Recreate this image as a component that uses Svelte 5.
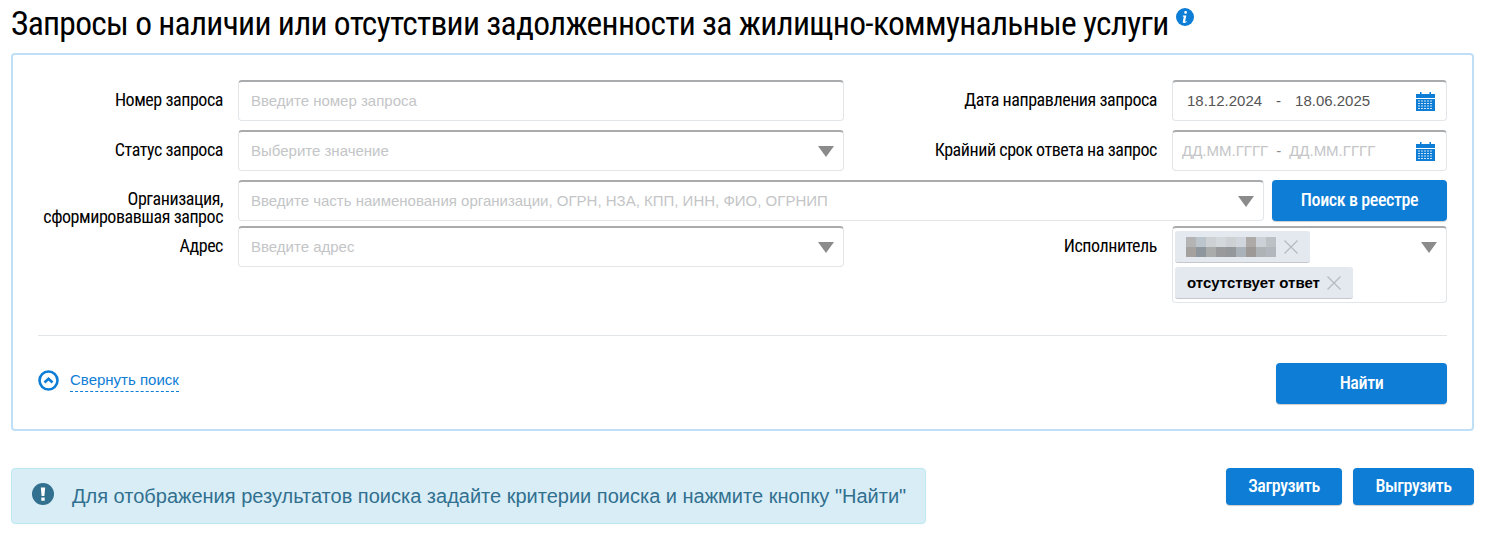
<script>
  // colours of the blurred name in the first chip
  const blur = [
    "#b4b4b4", "#bcc5cc", "#cdd1d3", "#d3d8dc", "#cdd1d4", "#d0d6db", "#aeaaa8", "#cbd1d6", "#bcc1c6",
    "#a4a19f", "#8e969e", "#a9acaa", "#989a9c", "#95989b", "#a9b2b9", "#9d9997", "#aeb3b5", "#b2b7bd",
  ];
</script>

<main>
  <h1>
    Запросы о наличии или отсутствии задолженности за жилищно-коммунальные услуги
    <svg class="info" viewBox="0 0 18 18" width="18" height="18">
      <circle cx="9" cy="9" r="9" fill="#0d7dd6" />
      <path d="M9.600 3a1.400 1.400 0 1 1-.01 2.800 1.400 1.400 0 0 1 .01-2.800zM6.800 7.600h3.600l-1.300 5.600c-.1.400.4.500 1.500-.3l.3.500c-1.300 1.300-2.200 1.800-3.200 1.700-.9-.1-1.100-.7-.9-1.500l1-4.900-1.100-.3z" fill="#fff" />
    </svg>
  </h1>

  <section class="panel">
    <div class="row r1">
      <label class="lbl left">Номер запроса</label>
      <div class="field wide"><span class="ph">Введите номер запроса</span></div>
      <label class="lbl right">Дата направления запроса</label>
      <div class="field date">
        <span class="val">18.12.2024</span><span class="dash val">-</span><span class="val">18.06.2025</span>
        <svg class="cal" viewBox="0 0 19 20" width="19" height="20">
          <path d="M0 3h4V1h1.500v2h8V1H15v2h4v4H0z" fill="#0d7dd6" />
          <path d="M0 8h19v12H0z" fill="#0d7dd6" />
          <path d="M2 10h15M2 12.500h15M2 15h15M2 17.500h15" stroke="#cfe5f7" stroke-width="1.200" stroke-dasharray="2 1" />
        </svg>
      </div>
    </div>

    <div class="row r2">
      <label class="lbl left">Статус запроса</label>
      <div class="field wide"><span class="ph">Выберите значение</span><i class="arrow"></i></div>
      <label class="lbl right">Крайний срок ответа на запрос</label>
      <div class="field date empty">
        <span class="ph">ДД.ММ.ГГГГ</span><span class="dash ph2">-</span><span class="ph">ДД.ММ.ГГГГ</span>
        <svg class="cal" viewBox="0 0 19 20" width="19" height="20">
          <path d="M0 3h4V1h1.500v2h8V1H15v2h4v4H0z" fill="#0d7dd6" />
          <path d="M0 8h19v12H0z" fill="#0d7dd6" />
          <path d="M2 10h15M2 12.500h15M2 15h15M2 17.500h15" stroke="#cfe5f7" stroke-width="1.200" stroke-dasharray="2 1" />
        </svg>
      </div>
    </div>

    <div class="row r3">
      <label class="lbl left two">Организация,<br />сформировавшая запрос</label>
      <div class="field grow">
        <span class="ph">Введите часть наименования организации, ОГРН, НЗА, КПП, ИНН, ФИО, ОГРНИП</span><i class="arrow"></i>
      </div>
      <button class="btn registry">Поиск в реестре</button>
    </div>

    <div class="row r4">
      <label class="lbl left">Адрес</label>
      <div class="field wide"><span class="ph">Введите адрес</span><i class="arrow"></i></div>
      <label class="lbl right">Исполнитель</label>
      <div class="field multi">
        <div class="chip">
          <div class="blur">
            {#each blur as c}
              <b style="background: {c}"></b>
            {/each}
          </div>
          <svg class="x" viewBox="0 0 14 14" width="14" height="14"><path d="M.5.500l13 13M13.500.500l-13 13" stroke="#b4bac2" stroke-width="1.200" /></svg>
        </div>
        <div class="chip">
          <span class="chip-text">отсутствует ответ</span>
          <svg class="x" viewBox="0 0 14 14" width="14" height="14"><path d="M.5.500l13 13M13.500.500l-13 13" stroke="#b4bac2" stroke-width="1.200" /></svg>
        </div>
        <i class="arrow"></i>
      </div>
    </div>

    <hr />

    <div class="foot">
      <div class="toggle">
        <svg viewBox="0 0 21 21" width="21" height="21">
          <circle cx="10.500" cy="10.500" r="9" fill="none" stroke="#0d7dd6" stroke-width="2.600" />
          <path d="M6.500 12.500l4-3.800 4 3.800" fill="none" stroke="#0d7dd6" stroke-width="2.600" />
        </svg>
        <span>Свернуть поиск</span>
      </div>
      <button class="btn find">Найти</button>
    </div>
  </section>

  <div class="bottom">
    <div class="alert">
      <svg viewBox="0 0 22 22" width="22" height="22">
        <circle cx="11" cy="11" r="11" fill="#31708f" />
        <path d="M8.800 4.500h4.400l-.8 8.500H9.600zM9.300 14.500h3.400v3.200H9.300z" fill="#fff" />
      </svg>
      <span>Для отображения результатов поиска задайте критерии поиска и нажмите кнопку "Найти"</span>
    </div>
    <div class="actions">
      <button class="btn load">Загрузить</button>
      <button class="btn unload">Выгрузить</button>
    </div>
  </div>
</main>

<style>
  :global(body) {
    margin: 0;
    background: #fff;
    font-family: "Liberation Sans", Arial, sans-serif;
    overflow: hidden;
  }
  main {
    width: 1487px;
    height: 535px;
    box-sizing: border-box;
    padding: 0 13px 0 11px;
  }
  h1 {
    margin: 0;
    height: 53px;
    box-sizing: border-box;
    padding-top: 5px;
    font: 400 33.5px/38px Roboto, sans-serif;
    font-stretch: 75%;
    letter-spacing: -0.7px;
    color: #000;
    white-space: nowrap;
  }
  .info {
    vertical-align: 9px;
    margin-left: 0;
  }
  .panel {
    height: 378px;
    box-sizing: border-box;
    border: 2px solid #bfdff7;
    border-radius: 4px;
    padding: 25px 25px 0;
  }
  .row {
    display: flex;
    align-items: flex-start;
  }
  .r1 { height: 50px; }
  .r2 { height: 50px; }
  .r3 { height: 46px; }
  .r4 { height: 102px; }
  .lbl {
    text-align: right;
    font: 400 18px/18px Roboto, sans-serif;
    font-stretch: 75%;
    letter-spacing: -0.45px;
    color: #000;
    padding-top: 11px;
    flex: none;
    white-space: nowrap;
  }
  .lbl.two {
    padding-top: 10px;
  }
  .left {
    width: 185px;
    margin-right: 15px;
  }
  .right {
    width: 313px;
    margin-right: 15px;
  }
  .field {
    position: relative;
    box-sizing: border-box;
    height: 41px;
    border: 1px solid #e3e6e9;
    border-top: 2px solid #a9abad;
    border-radius: 4px;
    display: flex;
    align-items: center;
    padding: 0 12px 2px;
    font-size: 15px;
    background: #fff;
    flex: none;
  }
  .wide { width: 606px; }
  .grow {
    width: 1026px;
    margin-right: 8px;
  }
  .date {
    width: 275px;
    padding-left: 14px;
  }
  .date.empty { padding-left: 9px; }
  .ph { color: #c3c5c7; white-space: nowrap; }
  .ph2 { color: #8c8c8c; }
  .val { color: #555; }
  .dash { margin: 0 14px; }
  .empty .dash { margin: 0 8px; }
  .cal {
    position: absolute;
    right: 11px;
    top: 9px;
  }
  .arrow {
    position: absolute;
    right: 9px;
    top: 14px;
    border-left: 8px solid transparent;
    border-right: 8px solid transparent;
    border-top: 11px solid #8b8b8b;
  }
  .multi {
    display: block;
    width: 275px;
    height: 77px;
    padding: 3px 2px;
  }
  .chip {
    display: flex;
    align-items: center;
    width: fit-content;
    height: 32px;
    box-sizing: border-box;
    background: #e4e8ef;
    border-bottom: 1px solid #c4c7cc;
    border-radius: 3px;
    padding: 0 12px 0 11px;
    margin-bottom: 4px;
  }
  .chip-text {
    font-size: 15px;
    font-weight: 700;
    color: #000;
    margin-left: 1px;
    margin-right: 7px;
    white-space: nowrap;
  }
  .blur {
    display: grid;
    grid-template-columns: repeat(9, 10px);
    grid-auto-rows: 10px;
    margin-right: 8px;
  }
  .x { flex: none; }
  hr {
    border: none;
    border-top: 1px solid #e3e6e9;
    margin: 7px 0 0;
  }
  .foot {
    display: flex;
    justify-content: space-between;
    align-items: flex-start;
    padding-top: 27px;
  }
  .toggle {
    display: flex;
    align-items: center;
    padding-top: 5px;
    gap: 11px;
    font-size: 15px;
    color: #0d7dd6;
  }
  .toggle span {
    border-bottom: 1px dashed #0d7dd6;
    padding-bottom: 2px;
    line-height: 18px;
    margin-top: 3px;
  }
  .btn {
    border: none;
    border-radius: 4px;
    background: #0d7dd6;
    color: #fff;
    font: 500 18px/18px Roboto, sans-serif;
    font-stretch: 75%;
    letter-spacing: -0.4px;
    padding: 0 0 2px;
    box-shadow: 0 1px 1px rgba(0, 0, 0, 0.2);
    flex: none;
    white-space: nowrap;
  }
  .registry {
    width: 175px;
    height: 41px;
  }
  .find {
    width: 171px;
    height: 41px;
  }
  .bottom {
    display: flex;
    justify-content: space-between;
    align-items: flex-start;
    padding-top: 37px;
  }
  .alert {
    width: 915px;
    height: 56px;
    box-sizing: border-box;
    background: #d9edf7;
    border: 1px solid #bce8f1;
    border-radius: 4px;
    display: flex;
    align-items: center;
    padding: 0 0 0 20px;
    gap: 18px;
    color: #31708f;
    font-size: 20px;
    white-space: nowrap;
  }
  .alert svg { margin-top: -4px; }
  .actions {
    display: flex;
    gap: 11px;
  }
  .load {
    width: 116px;
    height: 37px;
  }
  .unload {
    width: 121px;
    height: 37px;
  }
</style>
